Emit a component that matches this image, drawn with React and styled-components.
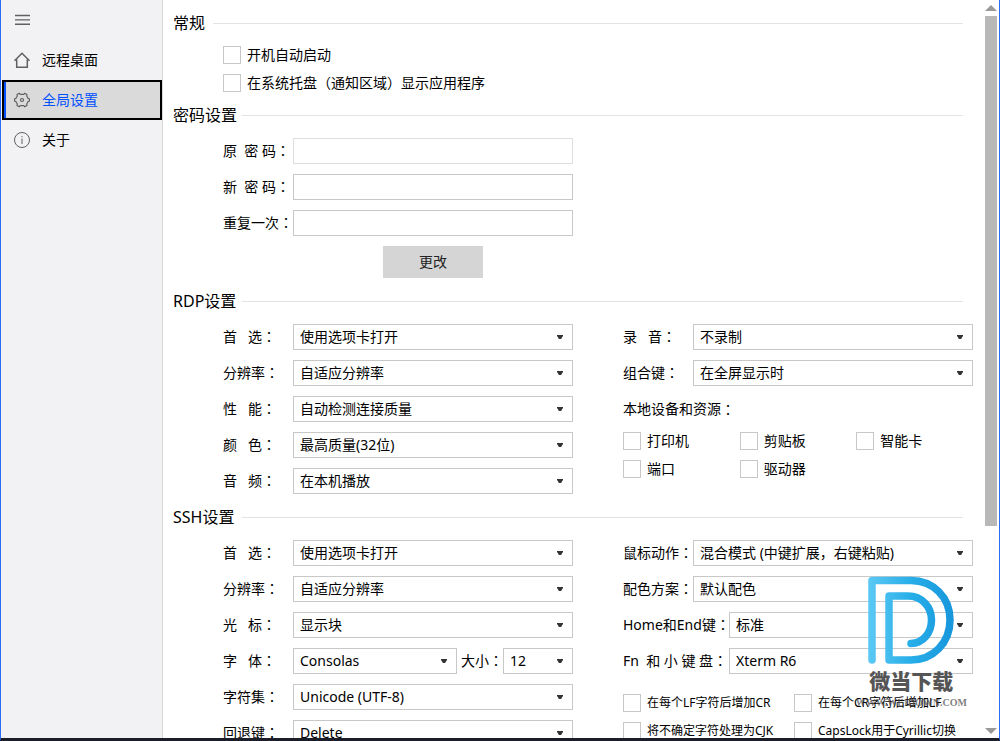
import React, { useId } from "react";
import styled, { createGlobalStyle } from "styled-components";

const GlobalStyle = createGlobalStyle`
  * { box-sizing: border-box; }
  body {
    margin: 0;
    background: #fff;
    color: #000;
    font: 14px/20px "Noto Sans", "Noto Sans CJK SC", sans-serif;
  }
  button, input, select { font: inherit; color: inherit; }
`;

const Window = styled.div`
  position: relative;
  display: flex;
  height: 100vh;
  overflow: hidden;
  border: solid #2a6cf5;
  border-width: 0 1px 3px;
  border-bottom-color: #1b1d28;
`;

const Sidebar = styled.nav`
  flex: 0 0 162px;
  padding-left: 1px;
  background: #f2f2f4;
  border-right: 1px solid #d9d9d4;
`;

const NavItem = styled.button`
  display: flex;
  align-items: center;
  gap: 12px;
  width: 100%;
  height: 40px;
  padding: 0 10px;
  border: 2px solid ${(p) => (p.$active ? "#000" : "transparent")};
  background: ${(p) => (p.$active ? "#dadada" : "transparent")};
  box-shadow: ${(p) => (p.$active ? "inset 2px 0 #0050ff" : "none")};
  color: ${(p) => (p.$active ? "#0050ff" : "#000")};
  text-align: left;

  svg {
    flex: none;
    width: 16px;
    height: 16px;
    fill: none;
    stroke: #606060;
  }
`;

const Content = styled.main`
  flex: 1;
  min-width: 0;
  overflow: hidden;
  padding-right: 12px;
`;

const Section = styled.section`
  padding-top: 11px;
`;

const Heading = styled.h2`
  display: flex;
  align-items: center;
  gap: ${(p) => (p.$wide ? "5px" : "8px")};
  min-width: 0;
  margin: 0 10px 11px;
  font-size: 16px;
  font-weight: 400;
  line-height: 24px;

  &::after {
    content: "";
    flex: 1;
    height: 1px;
    background: #e2e2e2;
  }
`;

const HeadingText = styled.span`
  min-width: ${(p) => (p.$wide ? "64px" : "0")};
`;

const Columns = styled.div`
  display: grid;
  grid-template-columns: 1fr 1fr;
  gap: 50px;
  padding-left: 60px;
`;

const Stack = styled.div`
  display: flex;
  flex-direction: column;
  gap: 10px;
`;

const Row = styled.div`
  display: flex;
  align-items: center;
  height: 26px;
`;

const Label = styled.label`
  flex: 0 0 ${(p) => (p.$wide ? "106px" : "70px")};
  min-width: 0;
  white-space: pre;
`;

const InlineLabel = styled.label`
  flex: 0 0 46px;
  min-width: 0;
  padding-left: 4px;
  white-space: pre;
`;

const Colon = styled.span`
  font-family: "Noto Sans CJK TC", sans-serif;
  line-height: 1;
`;

const TextInput = styled.input`
  flex: 1;
  min-width: 0;
  height: 26px;
  padding: 0 6px;
  border: 1px solid ${(p) => (p.$faint ? "#dedede" : "#c8c8c8")};
  background: #fff;
`;

const SelectBox = styled.div`
  display: grid;
  flex: ${(p) => (p.$small ? "0 0 70px" : "1")};
  align-items: center;
  min-width: 0;

  > * { grid-area: 1 / 1; }

  svg {
    justify-self: end;
    margin-right: 10px;
    fill: #333;
    pointer-events: none;
  }
`;

const Select = styled.select`
  appearance: none;
  width: 100%;
  height: 26px;
  padding: 0 20px 0 6px;
  border: 1px solid #c8c8c8;
  border-radius: 0;
  background: #fff;
`;

const ButtonRow = styled.div`
  display: flex;
  justify-content: center;
  padding-left: 70px;
`;

const Button = styled.button`
  width: 100px;
  height: 32px;
  border: 0;
  background: #d5d5d5;
  color: #222;
`;

const CheckGrid = styled.div`
  display: grid;
  grid-template-columns: repeat(${(p) => p.$columns}, 1fr);
  gap: 10px 0;
  margin-top: ${(p) => (p.$compact ? "10px" : "0")};
  padding-right: ${(p) => (p.$compact ? "8px" : "0")};
  font-size: ${(p) => (p.$compact ? "12px" : "14px")};
`;

const CheckLabel = styled.label`
  display: flex;
  align-items: center;
  gap: 6px;
  height: 18px;
  white-space: nowrap;

  input {
    appearance: none;
    flex: none;
    width: 18px;
    height: 18px;
    margin: 0;
    border: 1px solid #c8c8c8;
    background: #fff;
  }
  input:checked { background: #0050ff; }
`;

const ScrollBar = styled.div`
  flex: 0 0 14px;
  display: flex;
  flex-direction: column;
  padding: 5px 2px 4px 0;

  svg { display: block; fill: #999; }
`;

const Track = styled.div`
  flex: 1;
  padding: 5px 0 3px;
`;

const Thumb = styled.div`
  height: 72%;
  background: #b8b8b8;
`;

const Watermark = styled.div`
  position: absolute;
  right: 32px;
  bottom: 27px;
  display: flex;
  flex-direction: column;
  align-items: center;
  pointer-events: none;
`;

const WatermarkName = styled.div`
  color: #555;
  font-size: 21px;
  font-weight: 900;
  line-height: 28px;
`;

const WatermarkUrl = styled.div`
  color: rgba(70, 70, 70, 0.7);
  font: 700 10px/16px "Liberation Serif", serif;
`;

function Caption({ as: As = Label, id, text, wide }) {
  return (
    <As htmlFor={id} $wide={wide}>
      {text}
      <Colon>：</Colon>
    </As>
  );
}

function Dropdown({ id, value, small }) {
  return (
    <SelectBox $small={small}>
      <Select id={id} defaultValue={value}>
        <option>{value}</option>
      </Select>
      <svg width="6" height="4" viewBox="0 0 6 4" aria-hidden="true">
        <path d="M0 0H6V1L4 4H2L0 1Z" />
      </svg>
    </SelectBox>
  );
}

function SelectRow({ label, value, wide }) {
  const id = useId();
  return (
    <Row>
      <Caption id={id} text={label} wide={wide} />
      <Dropdown id={id} value={value} />
    </Row>
  );
}

function PasswordRow({ label, faint }) {
  const id = useId();
  return (
    <Row>
      <Caption id={id} text={label} />
      <TextInput id={id} type="password" $faint={faint} />
    </Row>
  );
}

function FontRow() {
  const family = useId();
  const size = useId();
  return (
    <Row>
      <Caption id={family} text="字   体" />
      <Dropdown id={family} value="Consolas" />
      <Caption as={InlineLabel} id={size} text="大小" />
      <Dropdown id={size} value="12" small />
    </Row>
  );
}

function Check({ children }) {
  return (
    <CheckLabel>
      <input type="checkbox" />
      <span>{children}</span>
    </CheckLabel>
  );
}

function Title({ children, wide }) {
  return (
    <Heading $wide={wide}>
      <HeadingText $wide={wide}>{children}</HeadingText>
    </Heading>
  );
}

function Logo() {
  return (
    <svg width="88" height="91" viewBox="0 0 88 91" aria-hidden="true">
      <defs>
        <linearGradient id="logo-outer" gradientUnits="userSpaceOnUse" x1="2" y1="0" x2="86" y2="0">
          <stop offset="0" stopColor="#5bc8f4" />
          <stop offset="0.5" stopColor="#27aee8" />
          <stop offset="1" stopColor="#1896dc" />
        </linearGradient>
      </defs>
      <path
        d="M5 84V4.500H44C66 4.500 83 21 83 44S66 84 44 84H22V20H41C55 20 64.500 31 64.500 44S56 67 44 67.500"
        fill="none"
        stroke="url(#logo-outer)"
        strokeWidth="7.500"
        strokeLinecap="round"
        strokeLinejoin="round"
      />
    </svg>
  );
}

export default function App() {
  return (
    <Window>
      <GlobalStyle />
      <Sidebar>
        <NavItem aria-label="菜单">
          <svg viewBox="0 0 16 16" strokeWidth="1.400"><path d="M1 3.500H16M1 7.900H16M1 12.300H16" /></svg>
        </NavItem>
        <NavItem>
          <svg viewBox="0 0 16 16" strokeWidth="1.500"><path d="M0.500 8.800L8 1.200L15.500 8.800M2.700 7.500V15.200H13.300V7.500" /></svg>
          远程桌面
        </NavItem>
        <NavItem $active>
          <svg viewBox="0 0 16 16" strokeWidth="1.200">
            <path d="M5.200 1.200L6.200 2.300H9.800L10.800 1.200L13 2.500L12.700 4L14.200 6.500L15.500 7V9L14.200 9.500L12.700 12L13 13.500L10.800 14.800L9.800 13.700H6.200L5.200 14.800L3 13.500L3.300 12L1.800 9.500L.5 9V7L1.800 6.500L3.300 4L3 2.500Z" />
            <circle cx="8" cy="8" r="1.500" />
          </svg>
          全局设置
        </NavItem>
        <NavItem>
          <svg viewBox="0 0 16 16">
            <circle cx="8" cy="8" r="7.500" />
            <path d="M8 6.500V12M8 4V5.200" />
          </svg>
          关于
        </NavItem>
      </Sidebar>

      <Content>
        <Section>
          <Title>常规</Title>
          <Columns>
            <Stack>
              <Check>开机自动启动</Check>
              <Check>在系统托盘（通知区域）显示应用程序</Check>
            </Stack>
          </Columns>
        </Section>

        <Section>
          <Title wide>密码设置</Title>
          <Columns>
            <Stack>
              <PasswordRow label="原  密 码" faint />
              <PasswordRow label="新  密 码" />
              <PasswordRow label="重复一次" />
              <ButtonRow>
                <Button>更改</Button>
              </ButtonRow>
            </Stack>
          </Columns>
        </Section>

        <Section>
          <Title wide>RDP设置</Title>
          <Columns>
            <Stack>
              <SelectRow label="首   选" value="使用选项卡打开" />
              <SelectRow label="分辨率" value="自适应分辨率" />
              <SelectRow label="性   能" value="自动检测连接质量" />
              <SelectRow label="颜   色" value="最高质量(32位)" />
              <SelectRow label="音   频" value="在本机播放" />
            </Stack>
            <Stack>
              <SelectRow label="录   音" value="不录制" />
              <SelectRow label="组合键" value="在全屏显示时" />
              <Row>
                本地设备和资源<Colon>：</Colon>
              </Row>
              <CheckGrid $columns={3}>
                <Check>打印机</Check>
                <Check>剪贴板</Check>
                <Check>智能卡</Check>
                <Check>端口</Check>
                <Check>驱动器</Check>
              </CheckGrid>
            </Stack>
          </Columns>
        </Section>

        <Section>
          <Title wide>SSH设置</Title>
          <Columns>
            <Stack>
              <SelectRow label="首   选" value="使用选项卡打开" />
              <SelectRow label="分辨率" value="自适应分辨率" />
              <SelectRow label="光   标" value="显示块" />
              <FontRow />
              <SelectRow label="字符集" value="Unicode (UTF-8)" />
              <SelectRow label="回退键" value="Delete" />
            </Stack>
            <Stack>
              <SelectRow label="鼠标动作" value="混合模式 (中键扩展，右键粘贴)" />
              <SelectRow label="配色方案" value="默认配色" />
              <SelectRow wide label="Home和End键" value="标准" />
              <SelectRow wide label="Fn  和 小 键 盘" value="Xterm R6" />
              <CheckGrid $columns={2} $compact>
                <Check>在每个LF字符后增加CR</Check>
                <Check>在每个CR字符后增加LF</Check>
                <Check>将不确定字符处理为CJK</Check>
                <Check>CapsLock用于Cyrillic切换</Check>
              </CheckGrid>
            </Stack>
          </Columns>
        </Section>
      </Content>

      <ScrollBar aria-hidden="true">
        <svg width="12" height="6" viewBox="0 0 12 6"><path d="M0 6L6 0L12 6Z" /></svg>
        <Track>
          <Thumb />
        </Track>
        <svg width="12" height="6" viewBox="0 0 12 6"><path d="M0 0H12L6 6Z" /></svg>
      </ScrollBar>

      <Watermark>
        <Logo />
        <WatermarkName>微当下载</WatermarkName>
        <WatermarkUrl>WWW.WEIDOWN.COM</WatermarkUrl>
      </Watermark>
    </Window>
  );
}
